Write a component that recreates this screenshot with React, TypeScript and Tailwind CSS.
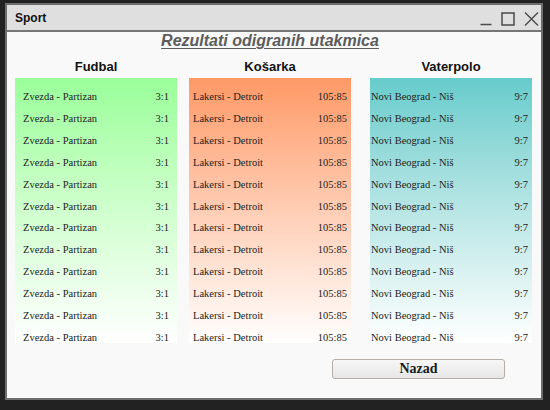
import React from 'react'

type Sport = {
  name: string
  match: string
  score: string
  gradient: string
  pad: string
}

const SPORTS: Sport[] = [
  {
    name: 'Fudbal',
    match: 'Zvezda - Partizan',
    score: '3:1',
    gradient: 'bg-gradient-to-b from-[#99ff99] to-[#ffffff]',
    pad: 'pl-2 pr-2',
  },
  {
    name: 'Košarka',
    match: 'Lakersi - Detroit',
    score: '105:85',
    gradient: 'bg-gradient-to-b from-[#ff9966] to-[#ffffff]',
    pad: 'pl-1 pr-1',
  },
  {
    name: 'Vaterpolo',
    match: 'Novi Beograd - Niš',
    score: '9:7',
    gradient: 'bg-gradient-to-b from-[#66cccc] to-[#ffffff]',
    pad: 'pl-px pr-1',
  },
]

const ROWS = Array.from({ length: 12 }, (_, i) => i)

function ResultColumn({ sport, className }: { sport: Sport; className?: string }) {
  return (
    <div className={`flex w-[162px] flex-col ${className ?? ''}`}>
      <h2 className="h-[14px] text-center font-['Liberation_Sans',Arial,sans-serif] text-[13px] leading-[14px] font-bold text-[#111]">
        {sport.name}
      </h2>
      <div className={`mt-[4px] h-[265px] overflow-hidden pt-[8px] ${sport.gradient} ${sport.pad}`}>
        {ROWS.map((i) => (
          <div
            key={i}
            className="flex h-[21.9px] items-center justify-between font-['Liberation_Serif','Times_New_Roman',serif] text-[10.5px] text-[#222]"
          >
            <span>{sport.match}</span>
            <span>{sport.score}</span>
          </div>
        ))}
      </div>
    </div>
  )
}

export default function App() {
  return (
    <div className="h-[410px] w-[550px] bg-[#222222] pt-[3px] pl-[5px]">
      <div className="flex h-[397px] w-[538px] flex-col border-2 border-[#6e6e6e] bg-[#f9f9f9]">
        {/* title bar */}
        <div className="flex h-[27px] shrink-0 items-center justify-between border-b-2 border-[#767676] bg-[#dfdfdf] pr-[2px] pl-[8px]">
          <span className="font-['Liberation_Sans',Arial,sans-serif] text-[12px] font-bold text-[#111]">Sport</span>
          <div className="flex items-center gap-[9px] pt-[2px]">
            <svg width="12" height="14" viewBox="0 0 12 14" fill="none" stroke="#4a4a4a" strokeWidth="1.5">
              <path d="M0.5 12.5 H11.5" />
            </svg>
            <svg width="14" height="14" viewBox="0 0 14 14" fill="none" stroke="#4a4a4a" strokeWidth="1.5">
              <rect x="1" y="1" width="12" height="12" />
            </svg>
            <svg width="15" height="14" viewBox="0 0 15 14" fill="none" stroke="#4a4a4a" strokeWidth="1.4">
              <path d="M1 0.5 L14 13.5 M14 0.5 L1 13.5" />
            </svg>
          </div>
        </div>

        {/* heading */}
        <div className="flex h-[18px] items-end justify-center pr-[8px]">
          <span className="font-['Liberation_Sans',Arial,sans-serif] text-[16px] leading-[18px] font-bold text-[#5c5c5c] italic underline decoration-1 underline-offset-2">
            {' '}Rezultati odigranih utakmica
          </span>
        </div>

        {/* columns */}
        <div className="mt-[10px] flex pl-[8px]">
          <ResultColumn sport={SPORTS[0]} />
          <ResultColumn sport={SPORTS[1]} className="ml-[12px] w-[161px]" />
          <ResultColumn sport={SPORTS[2]} className="ml-[19px]" />
        </div>

        {/* footer */}
        <div className="mt-[16px] flex justify-end pr-[36px]">
          <button className="h-[20px] w-[173px] rounded-[3px] border border-[#b5aea5] bg-gradient-to-b from-[#f7f7f7] to-[#e6e6e6] font-['Liberation_Serif','Times_New_Roman',serif] text-[14px] leading-[18px] font-bold text-[#1a1a1a]">
            Nazad
          </button>
        </div>
      </div>
    </div>
  )
}
